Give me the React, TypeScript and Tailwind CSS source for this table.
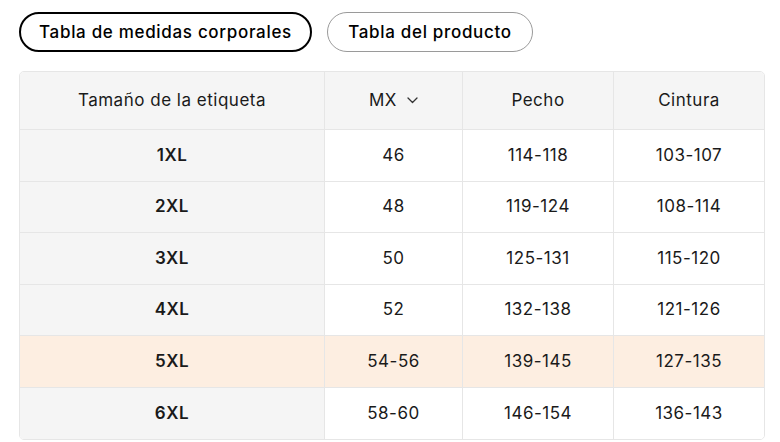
const rows = [
	{ size: "1XL", mx: "46", pecho: "114-118", cintura: "103-107" },
	{ size: "2XL", mx: "48", pecho: "119-124", cintura: "108-114" },
	{ size: "3XL", mx: "50", pecho: "125-131", cintura: "115-120" },
	{ size: "4XL", mx: "52", pecho: "132-138", cintura: "121-126" },
	{ size: "5XL", mx: "54-56", pecho: "139-145", cintura: "127-135", active: true },
	{ size: "6XL", mx: "58-60", pecho: "146-154", cintura: "136-143" },
];

export default function App() {
	return (
		<div
			className="w-[780px] h-[442px] bg-white text-[#1a1a1a] pl-[19px] pt-[12px]"
			style={{ fontFamily: "Inter, 'Noto Sans', sans-serif" }}
		>
			<div className="flex gap-[15px]">
				<button
					type="button"
					className="h-[40px] w-[293px] pt-[2px] rounded-full border-2 border-black text-[17px] tracking-[0.04em] font-medium text-black"
				>
					Tabla de medidas corporales
				</button>
				<button
					type="button"
					className="h-[40px] w-[206px] pt-[2px] rounded-full border border-[#9a9a9a] text-[17px] tracking-[0.04em] font-medium text-black"
				>
					Tabla del producto
				</button>
			</div>

			<div className="mt-[19px] w-[746px] rounded-[5px] border border-[#e6e6e6] overflow-hidden text-[17px] tracking-[0.03em]">
				<div className="grid grid-cols-[305px_138px_151px_1fr] h-[58px] bg-[#f5f5f5] border-b border-[#e6e6e6]">
					<div className="flex items-center justify-center border-r border-[#e6e6e6]">Tamaño de la etiqueta</div>
					<div className="flex items-center justify-center gap-[10px] border-r border-[#e6e6e6]">
						MX
						<svg width="11" height="7" viewBox="0 0 11 7" fill="none" aria-hidden="true">
							<path d="M1 1l4.5 4.5L10 1" stroke="#333" strokeWidth="1.3" strokeLinecap="round" strokeLinejoin="round" />
						</svg>
					</div>
					<div className="flex items-center justify-center border-r border-[#e6e6e6]">Pecho</div>
					<div className="flex items-center justify-center">Cintura</div>
				</div>
				{rows.map((r, i) => (
					<div
						key={r.size}
						className={`grid grid-cols-[305px_138px_151px_1fr] h-[51.5px] ${i < rows.length - 1 ? "border-b border-[#e6e6e6]" : ""} ${r.active ? "bg-[#fdeee1]" : "bg-white"}`}
					>
						<div
							className={`flex items-center justify-center font-semibold border-r border-[#e6e6e6] ${r.active ? "" : "bg-[#f5f5f5]"}`}
						>
							{r.size}
						</div>
						<div className="flex items-center justify-center border-r border-[#e6e6e6]">{r.mx}</div>
						<div className="flex items-center justify-center border-r border-[#e6e6e6]">{r.pecho}</div>
						<div className="flex items-center justify-center">{r.cintura}</div>
					</div>
				))}
			</div>
		</div>
	);
}
